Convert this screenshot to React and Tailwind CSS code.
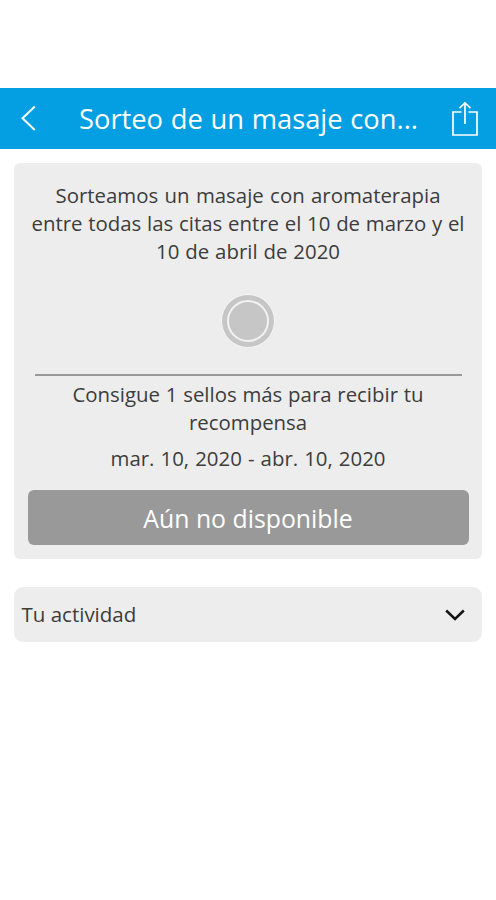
const lineText = "whitespace-nowrap [text-align-last:justify]";

function Header() {
  return (
    <header className="flex h-[61px] items-center bg-[#039fe2] text-white">
      <svg className="ml-5 h-7 w-4 shrink-0" viewBox="0 0 16 28" fill="none" stroke="currentColor" strokeWidth="2">
        <path d="M14.8 1.5 L2.5 13.2 L14.8 25" />
      </svg>
      <h1 className={`ml-[43px] w-[339px] text-[27.3px] leading-[60px] ${lineText}`}>Sorteo de un masaje con...</h1>
      <svg className="ml-[33px] h-9 w-7 shrink-0" viewBox="0 0 28 36" fill="none" stroke="currentColor" strokeWidth="1.7">
        <path d="M10.5 11 H2 V34 H26 V11 H17.5 M14 23 V2 M8.5 7.2 L14 2 L19.5 7.2" />
      </svg>
    </header>
  );
}

export default function App() {
  return (
    <div className="h-[900px] w-[496px] overflow-hidden bg-white pt-[88px] font-['Open_Sans',sans-serif] text-[#3c3c3c]">
      <Header />
      <main className="px-[14px] pt-[14px]">
        <section className="flex h-[396px] flex-col items-center rounded-md bg-[#ededed] pt-[18px] text-[20.4px] leading-[28px]">
          <p className={`w-[385px] ${lineText}`}>Sorteamos un masaje con aromaterapia</p>
          <p className={`w-[433px] ${lineText}`}>entre todas las citas entre el 10 de marzo y el</p>
          <p className={`w-[184px] ${lineText}`}>10 de abril de 2020</p>
          <div className="mt-[29px] flex size-[54px] shrink-0 items-center justify-center rounded-full border border-[#f7f7f7] bg-[#c6c6c6]">
            <div className="size-[42px] rounded-full border-2 border-[#f3f3f3]" />
          </div>
          <div className="mt-[26px] h-[2px] w-[427px] shrink-0 bg-[#999]" />
          <p className={`mt-[4px] w-[351px] ${lineText}`}>Consigue 1 sellos más para recibir tu</p>
          <p className={`w-[118px] ${lineText}`}>recompensa</p>
          <p className={`mt-[8px] w-[275px] ${lineText}`}>mar. 10, 2020 - abr. 10, 2020</p>
          <button className="mt-[18px] flex h-[55px] w-[441px] shrink-0 items-center justify-center rounded-md bg-[#999] text-[24.8px] text-white">
            Aún no disponible
          </button>
        </section>
        <section className="mt-[28px] flex h-[55px] items-center justify-between rounded-[9px] bg-[#ededed] pr-[17px] pl-[7.5px] text-[20.5px]">
          <span>Tu actividad</span>
          <svg className="h-3 w-5" viewBox="0 0 20 12" fill="none" stroke="#151515" strokeWidth="2.5">
            <path d="M1.2 1.5 L10 10 L18.8 1.5" />
          </svg>
        </section>
      </main>
    </div>
  );
}
